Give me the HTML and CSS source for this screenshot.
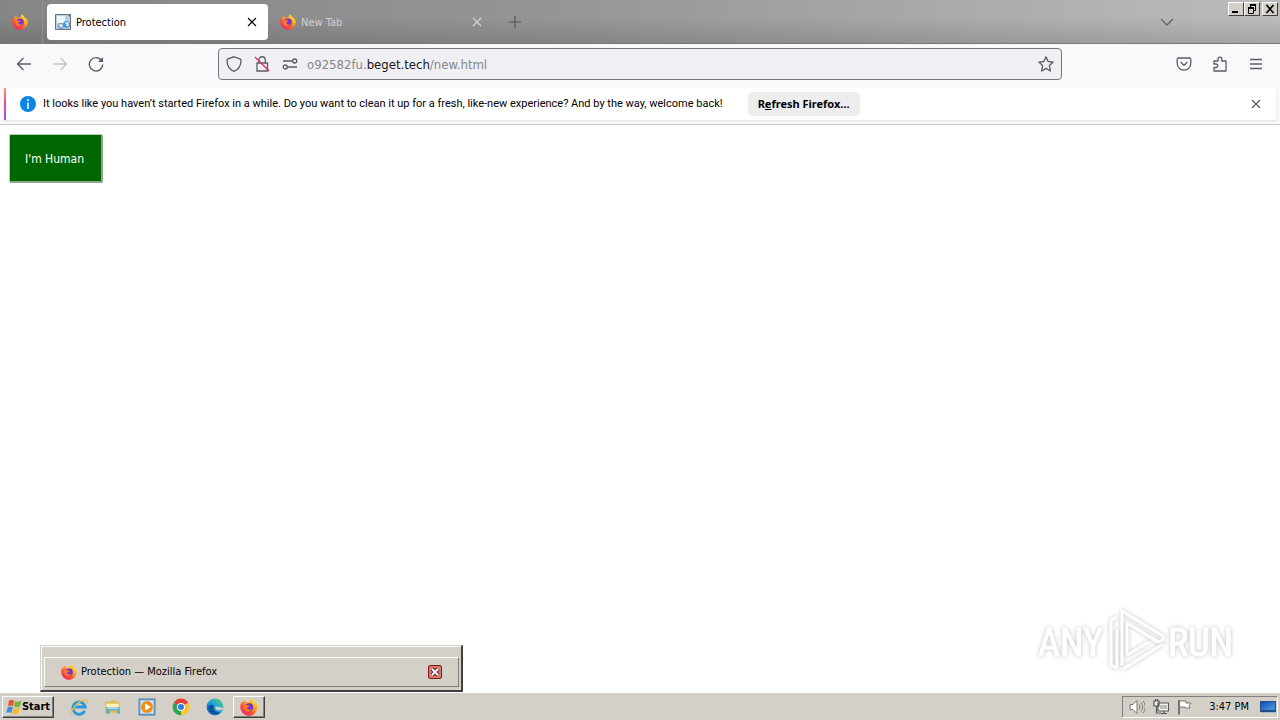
FILE: index.html
```html
<!DOCTYPE html>
<html lang="en">
<head>
<meta charset="utf-8">
<title>Protection — Mozilla Firefox</title>
<link rel="stylesheet" href="styles.css">
</head>
<body>
<svg class="defs" aria-hidden="true">
  <defs>
    <linearGradient id="ffBody" x1="0.85" y1="0.1" x2="0.2" y2="0.95">
      <stop offset="0" stop-color="#ffe03a"/><stop offset="0.4" stop-color="#ff9a1f"/><stop offset="0.7" stop-color="#ff4a3a"/><stop offset="1" stop-color="#e8286a"/>
    </linearGradient>
    <linearGradient id="edgeBody" x1="0" y1="1" x2="1" y2="0">
      <stop offset="0" stop-color="#0c59a4"/><stop offset="0.5" stop-color="#1b9de2"/><stop offset="1" stop-color="#5fd668"/>
    </linearGradient>
    <linearGradient id="screen" x1="0" y1="0" x2="1" y2="1">
      <stop offset="0" stop-color="#1450a8"/><stop offset="1" stop-color="#4c9be8"/>
    </linearGradient>
  </defs>
  <symbol id="firefox" viewBox="0 0 16 16">
    <path fill="url(#ffBody)" d="M15.3 6.2C15 4.800 13.900 3.700 13 3.200c.4.8.6 1.400.7 1.900C12.500 2.600 11 2 10.300.3 8.800 1.300 8.500 2.700 8.400 3.400 7.500 3.400 6.500 3.600 5.700 4 4.500 3.300 4.200 2.500 4.200 1.600 3 2.400 2.300 3.500 2 4.700 1.700 4.300 1.600 3.700 1.700 3 .7 4.300.2 6.300.2 8.100a7.800 7.800 0 0 0 15.600 0c0-.7-.2-1.300-.5-1.900z"/>
    <circle cx="8" cy="8.400" r="3.800" fill="#7b36c9"/>
    <path fill="#ff7a28" d="M3.800 6.500c1.500-.8 3 .1 4.600.2.300 1-1.400 1.200-2.100 1.700 0 2.300 2.800 2.600 4.200 1.200-.7 2.900-4.200 3.400-6 1.600-1.300-1.200-1.500-3.100-.7-4.700z"/>
    <path fill="#4b35b4" d="M8 5c2-.4 3.600 1.200 3.400 3-.5-1.300-1.500-2-3.400-3z"/>
  </symbol>
  <symbol id="cross" viewBox="0 0 10 10"><path d="M1 1l8 8M9 1l-8 8" fill="none" stroke="currentColor" stroke-width="1.200"/></symbol>
</svg>

<header class="tabstrip">
  <button class="view" aria-label="Firefox View"><svg class="i16"><use href="#firefox"/></svg></button>
  <div class="tab active">
    <svg class="i16" viewBox="0 0 16 16">
      <path d="M0 0h16v16H0z" fill="#68737e"/><path d="M1 1h12l2 2v12H1z" fill="#b9cfe0"/><path d="M2 2h8v7H2z" fill="#eef5fa"/>
      <circle cx="6" cy="12" r="2.500" fill="#a9c7e2" stroke="#5e8fbd"/><circle cx="11.500" cy="10.500" r="3.500" fill="#4d95d8"/>
      <path d="M10 9h2v3h1v-4M4 11h3v2" stroke="#fff" fill="none"/>
    </svg>
    <span class="label">Protection</span>
    <button class="close" aria-label="Close tab"><svg class="i10"><use href="#cross"/></svg></button>
  </div>
  <div class="tab idle">
    <svg class="i16"><use href="#firefox"/></svg>
    <span class="label">New Tab</span>
    <button class="close" aria-label="Close tab"><svg class="i10"><use href="#cross"/></svg></button>
  </div>
  <button class="newtab" aria-label="Open a new tab"><svg class="i12" viewBox="0 0 12 12"><path d="M6 0v12M0 6h12" stroke="currentColor" stroke-width="1.200"/></svg></button>
  <button class="alltabs" aria-label="List all tabs"><svg class="i14" viewBox="0 0 14 14"><path d="M1 4l6 6 6-6" fill="none" stroke="currentColor" stroke-width="1.300"/></svg></button>
  <div class="winctl">
    <button aria-label="Minimize"><svg viewBox="0 0 12 10"><path d="M2 8h6" stroke="#000" stroke-width="2"/></svg></button>
    <button aria-label="Restore"><svg viewBox="0 0 12 10"><path d="M4 1h6M2 4h6" stroke="#000" stroke-width="2"/><path d="M4.500 1v3M9.500 1v5.500H8M2.500 4v5.500h5V4" fill="none" stroke="#000"/></svg></button>
    <button class="quit" aria-label="Close"><svg viewBox="0 0 12 10"><path d="M2.500 1l7 8M9.500 1l-7 8" stroke="#000" stroke-width="1.700"/></svg></button>
  </div>
</header>

<nav class="toolbar">
  <div class="side">
    <button aria-label="Back"><svg class="i16" viewBox="0 0 16 16"><path d="M15 8H1.500M7.500 2l-6 6 6 6"/></svg></button>
    <button aria-label="Forward" disabled><svg class="i16" viewBox="0 0 16 16"><path d="M1 8h13.500M8.500 2l6 6-6 6"/></svg></button>
    <button aria-label="Reload"><svg class="i16" viewBox="0 0 16 16"><path d="M13.500 4.500A6.700 6.700 0 1 0 14.700 8.500"/><path d="M15 1v5h-5z" fill="currentColor" stroke="none"/></svg></button>
  </div>
  <form class="urlbar">
    <button type="button" aria-label="Tracking protection"><svg class="i16" viewBox="0 0 16 16"><path d="M8 .8l6 2c.8.3 1 .8 1 1.400C15 9.500 12.500 13.500 8 15.300 3.500 13.500 1 9.500 1 4.200c0-.6.2-1.100 1-1.400z"/></svg></button>
    <button type="button" aria-label="Connection not secure"><svg class="i16" viewBox="0 0 16 16"><path d="M3 7h10.500v8H3zM4.800 7V4a3.200 3.200 0 0 1 6.500 0v3"/><path d="M1 1l14 14" stroke="#e22850"/></svg></button>
    <button type="button" aria-label="Permissions"><svg class="i16" viewBox="0 0 16 16"><path d="M1 5h9M6 11h9"/><circle cx="12.700" cy="5" r="2"/><circle cx="3.300" cy="11" r="2"/></svg></button>
    <a class="url" href="#">o92582fu.<b>beget.tech</b>/new.html</a>
    <button type="button" aria-label="Bookmark this page"><svg class="i16" viewBox="0 0 16 16"><path stroke-linejoin="round" d="M8 .8l2.100 4.700 5.100.6-3.800 3.500 1 5.400L8 12.400 3.600 15l1-5.400L.8 6.100l5.100-.6z"/></svg></button>
  </form>
  <div class="side end">
    <button aria-label="Save to Pocket"><svg class="i16" viewBox="0 0 16 16"><path d="M2.500 2h11c.8 0 1.300.5 1.300 1.300v4a6.800 6.800 0 0 1-13.600 0v-4C1.200 2.500 1.700 2 2.500 2zM4.500 6L8 9.400 11.500 6"/></svg></button>
    <button aria-label="Extensions"><svg class="i16" viewBox="0 0 16 16"><path stroke-linejoin="round" d="M2 5h4V3a1.900 1.900 0 0 1 3.800 0v2H14v10H2v-3.500h2a1.700 1.700 0 0 0 0-3.500H2z"/></svg></button>
    <button aria-label="Menu"><svg class="i16" viewBox="0 0 16 16"><path d="M2 3.500h12M2 8h12M2 12.500h12"/></svg></button>
  </div>
</nav>

<aside class="notice">
  <div class="card">
    <svg class="i16" viewBox="0 0 16 16"><circle cx="8" cy="8" r="8" fill="#0a84e8"/><path d="M8 6.500V13M8 3v2" stroke="#fff" stroke-width="1.500"/></svg>
    <span class="msg">It looks like you haven’t started Firefox in a while. Do you want to clean it up for a fresh, like-new experience? And by the way, welcome back!</span>
    <button class="refresh">R<u>e</u>fresh Firefox…</button>
    <button class="dismiss" aria-label="Dismiss"><svg class="i10"><use href="#cross"/></svg></button>
  </div>
</aside>

<main class="page">
  <button class="human">I'm Human</button>
  <svg class="watermark" viewBox="0 0 210 70" role="img" aria-label="ANY RUN">
    <g class="glow">
      <text x="6" y="51">ANY</text>
      <text x="136" y="51">RUN</text>
      <path d="M85 12l-6 3v45l6 3V25"/>
      <path d="M90 60V6l41 25v4l-5 2-31-19v32"/>
      <path d="M95 50l22-13M131 39L91 64"/>
    </g>
  </svg>
  <div class="preview">
    <div class="entry">
      <svg class="i16"><use href="#firefox"/></svg>
      <span>Protection — Mozilla Firefox</span>
      <button aria-label="Close window"><svg class="i14" viewBox="0 0 14 14"><rect x=".5" y=".5" width="13" height="13" rx="1.500" fill="#d77a72" stroke="#7d1717"/><path d="M4 4l6 6M10 4l-6 6" stroke="#5d2020" stroke-width="4"/><path d="M4 4l6 6M10 4l-6 6" stroke="#fff" stroke-width="2"/></svg></button>
    </div>
  </div>
</main>

<footer class="taskbar">
  <button class="start"><svg class="i16" viewBox="0 0 16 16"><path fill="#e8562a" d="M3 1.500c2-1.200 3.500-.9 5 0L7 7.300c-1.600-.9-3-1-5-.1z"/><path fill="#78b43c" d="M9 2c1.800 1 3.600 1 6.500 0l-1.700 5.700c-2 .9-4 .9-5.800-.1z"/><path fill="#3d8ee0" d="M1.700 8.200c2-.9 3.500-.9 5.100.1l-1.300 5.800c-1.700-1-3.200-1-5.200 0z"/><path fill="#f5bd20" d="M7.800 8.800c1.800.9 3.600 1 5.700 0l-1.400 5.800c-2 .9-3.900.8-5.600-.1z"/></svg>Start</button>
  <div class="apps">
    <button aria-label="Internet Explorer"><svg class="i18" viewBox="0 0 16 16"><path d="M13 11.500A5.500 5.500 0 1 1 13.500 8H4" fill="none" stroke="#249bdd" stroke-width="2.500"/><path d="M2 14.500C-1 12 8 1.500 14 1.500c1.500 0 1.600 1.500.8 3" fill="none" stroke="#eebc3a" stroke-width="1.200"/></svg></button>
    <button aria-label="File Explorer"><svg class="i18" viewBox="0 0 16 16"><path fill="#e0bd58" d="M1 3h5l1-1h4v2h3v9H1z"/><path fill="#fff2b5" d="M2 5h11v3H2z"/><path fill="#64a8c9" d="M2 8h12v6h-2v-3H5v3H2z"/><path fill="#a8d3e2" d="M3 8h10v2H3z"/></svg></button>
    <button aria-label="Media Player"><svg class="i18" viewBox="0 0 16 16"><path fill="#9ac5e8" stroke="#447fb1" d="M1 1h14v14H1z"/><path fill="#d2e5f4" d="M2.500 2.500h11v11h-11z"/><circle cx="8" cy="8" r="5.300" fill="#f28a13"/><path fill="#fff" d="M6.300 4.700L11.500 8l-5.200 3.300z"/></svg></button>
    <button aria-label="Chrome"><svg class="i18" viewBox="0 0 16 16"><path fill="#e24134" d="M8 8L1.500 4.300A7.500 7.500 0 0 1 14.500 4.300z"/><path fill="#fcc629" d="M8 8l6.500-3.700A7.500 7.500 0 0 1 8 15.500z"/><path fill="#2da44e" d="M8 8v7.500A7.500 7.500 0 0 1 1.500 4.300z"/><circle cx="8" cy="8" r="3.600" fill="#fff"/><circle cx="8" cy="8" r="2.700" fill="#3879e8"/></svg></button>
    <button aria-label="Edge"><svg class="i18" viewBox="0 0 16 16"><circle cx="8" cy="8" r="7.500" fill="url(#edgeBody)"/><path fill="#0b4e98" d="M2 8c2-3 5-2 5 0-1 2 1 5 5.500 5C8 16 2 14 2 8z"/><path fill="#d4d0c8" d="M8 8.500C9 6 13 9.500 15.800 8.500c0 2.500-5.800 3.500-7.200 1.500z"/></svg></button>
    <button class="pressed" aria-label="Firefox"><svg class="i18"><use href="#firefox"/></svg></button>
  </div>
  <div class="tray">
    <svg class="i16" viewBox="0 0 16 16"><path d="M1 5.500h3l4-4v13l-4-4H1z" fill="#fff" stroke="#777"/><path d="M10 5.500c1.200 1.500 1.200 3.500 0 5M12 3.500c2.300 2.500 2.300 6.500 0 9M14 2c3 3.500 3 8.500 0 12" fill="none" stroke="#777"/></svg>
    <svg class="i16" viewBox="0 0 16 16"><path d="M5 4h10.500v8H5zM8 14.500h6M11 12v2M1 2h5v5H1zM2.500 2V0M4.500 2V0M3.500 7v7H8" fill="#f4f4f0" stroke="#555" stroke-width="1.200"/><path d="M7 6h7v4H7z" fill="#bbb"/></svg>
    <svg class="i16" viewBox="0 0 16 16"><path d="M3 2h6v2h5l-2 3 1 2H8V8H3" fill="#fff" stroke="#777"/><path d="M2 1v14.500" stroke="#555" stroke-width="1.500"/></svg>
    <time>3:47 PM</time>
    <svg class="i16" viewBox="0 0 16 16"><path d="M0 2h16v11H0z" fill="#244e87"/><path d="M1 3h14v8H1z" fill="url(#screen)"/><path d="M1 13h15v1H1z" fill="#9fb9d5"/></svg>
  </div>
</footer>
</body>
</html>
```
FILE: styles.css
```css
* { box-sizing: border-box; }
body {
  margin: 0;
  min-height: 100vh;
  display: flex;
  flex-direction: column;
  background: #fff;
  color: #000;
  font: 11px/16px "DejaVu Sans Condensed", "DejaVu Sans", sans-serif;
}
button {
  display: flex;
  align-items: center;
  justify-content: center;
  padding: 0;
  border: 0;
  background: none;
  color: inherit;
  font: inherit;
}
svg { display: block; flex: none; }
.defs { position: absolute; width: 0; height: 0; }
.i10 { width: 10px; height: 10px; }
.i12 { width: 12px; height: 12px; }
.i14 { width: 14px; height: 14px; }
.i16 { width: 16px; height: 16px; }
.i18 { width: 18px; height: 18px; }

.tabstrip {
  position: relative;
  display: flex;
  align-items: center;
  height: 44px;
  background: linear-gradient(to bottom, rgba(0, 0, 0, 0) 40%, rgba(0, 0, 0, 0.12)), linear-gradient(to right, #858585, #969696 45%, #bcbcbc);
  border-bottom: 1px solid #777;
}
.view { width: 43px; height: 43px; padding-right: 3px; border-right: 1px solid #919191; }
.tab {
  display: flex;
  align-items: center;
  gap: 5px;
  height: 36px;
  padding: 0 11px 0 8px;
  border-radius: 4px;
}
.tab .label { flex: 1; padding-top: 2px; }
.active { width: 221px; margin-left: 4px; background: #fff; }
.idle { width: 221px; margin-left: 4px; color: #d2d2d2; }
.newtab { width: 44px; height: 36px; color: #555; }
.alltabs { width: 36px; height: 36px; margin: 0 95px 0 auto; color: #666; }
.winctl { position: absolute; top: 2px; right: 2px; display: flex; }
.winctl button {
  width: 16px;
  height: 14px;
  background: #d4d0c8;
  border: 1px solid;
  border-color: #fff #404040 #404040 #fff;
}
.winctl svg { width: 12px; height: 10px; }
.winctl .quit { margin-left: 2px; }

.toolbar {
  display: flex;
  align-items: center;
  height: 42px;
  padding: 0 6px 2px;
  background: #f9f9fb;
  color: #5b5b66;
}
.toolbar svg { fill: none; stroke: currentColor; stroke-width: 1.3; }
.side { flex: 1; display: flex; }
.side button { width: 36px; height: 32px; }
.side button:disabled { color: #c3c3c8; }
.end { justify-content: flex-end; }
.urlbar {
  display: flex;
  align-items: center;
  flex: 0 1 calc(66% + 7px);
  min-width: 0;
  height: 32px;
  padding: 0 1px;
  border: 1px solid #73737c;
  border-radius: 4px;
  background: #f0f0f4;
}
.urlbar button { width: 28px; height: 28px; }
.url {
  flex: 1;
  padding: 2px 0 0 3px;
  color: #85858c;
  font-size: 13px;
  text-decoration: none;
}
.url b { color: #15141a; font-weight: normal; }

.notice { padding: 2px 4px 4px; background: #f9f9fb; border-bottom: 1px solid #ccc; }
.card {
  display: flex;
  align-items: center;
  height: 32px;
  padding: 0 10px 0 14px;
  border-left: 2px solid;
  border-image: linear-gradient(#ff9a62, #e8479b, #9059ff) 1;
  background: #fff;
  box-shadow: 0 1px 2px #ddd;
}
.msg { margin-left: 7px; font-family: Roboto, sans-serif; }
.refresh {
  height: 24px;
  margin-left: 25px;
  padding: 0 10px;
  border-radius: 4px;
  background: #ededee;
  font-family: "Noto Sans", sans-serif;
  font-weight: bold;
}
.dismiss { width: 20px; height: 20px; margin-left: auto; color: #5b5b66; }

.page { position: relative; flex: 1; padding: 9px; }
.human {
  height: 49px;
  padding: 2px 17px 0 15px;
  border: 2px solid;
  border-width: 1px 2px 2px 1px;
  border-color: #b5cdb5 #8ca68c #8ca68c #b5cdb5;
  border-radius: 2px;
  background: #060;
  color: #fff;
  font-size: 12px;
}
.watermark { position: absolute; right: 38px; bottom: 17px; width: 210px; height: 70px; }

.preview {
  position: absolute;
  left: 40px;
  bottom: 0;
  width: 423px;
  padding: 11px 2px 3px 3px;
  background: #d4d0c8;
  border: 1px solid;
  border-color: #d4d0c8 #404040 #404040 #d4d0c8;
  border-width: 1px 2px 2px 1px;
  box-shadow: inset 1px 1px #fff;
}
.entry {
  display: flex;
  align-items: center;
  gap: 4px;
  height: 30px;
  padding: 0 16px;
  border: 1px solid;
  border-color: #fff #808080 #808080 #fff;
}
.entry button { margin-left: auto; }

.taskbar {
  display: flex;
  align-items: center;
  height: 28px;
  padding: 2px;
  background: #d4d0c8;
  border-top: 1px solid #fff;
}
.start, .pressed {
  border: 1px solid;
  border-color: #fff #404040 #404040 #fff;
  box-shadow: inset -1px -1px #808080;
}
.start { width: 52px; height: 22px; font-weight: bold; }
.apps { display: flex; margin-left: 9px; gap: 2px; }
.apps button { width: 32px; height: 22px; }
.tray {
  display: flex;
  align-items: center;
  gap: 8px;
  height: 22px;
  margin-left: auto;
  padding: 0 1px 0 6px;
  border: 1px solid;
  border-color: #808080 #fff #fff #808080;
}
.tray time { margin: 0 3px 0 8px; }

.glow { opacity: 0.9; filter: drop-shadow(0 0 2px #bbb); }
.glow text { font: 38px "Liberation Sans Narrow", "Roboto Condensed", "Liberation Sans", sans-serif; fill: #fff; stroke: #fff; }
.glow path { fill: none; stroke: #fff; stroke-width: 3; stroke-linejoin: round; }
```
